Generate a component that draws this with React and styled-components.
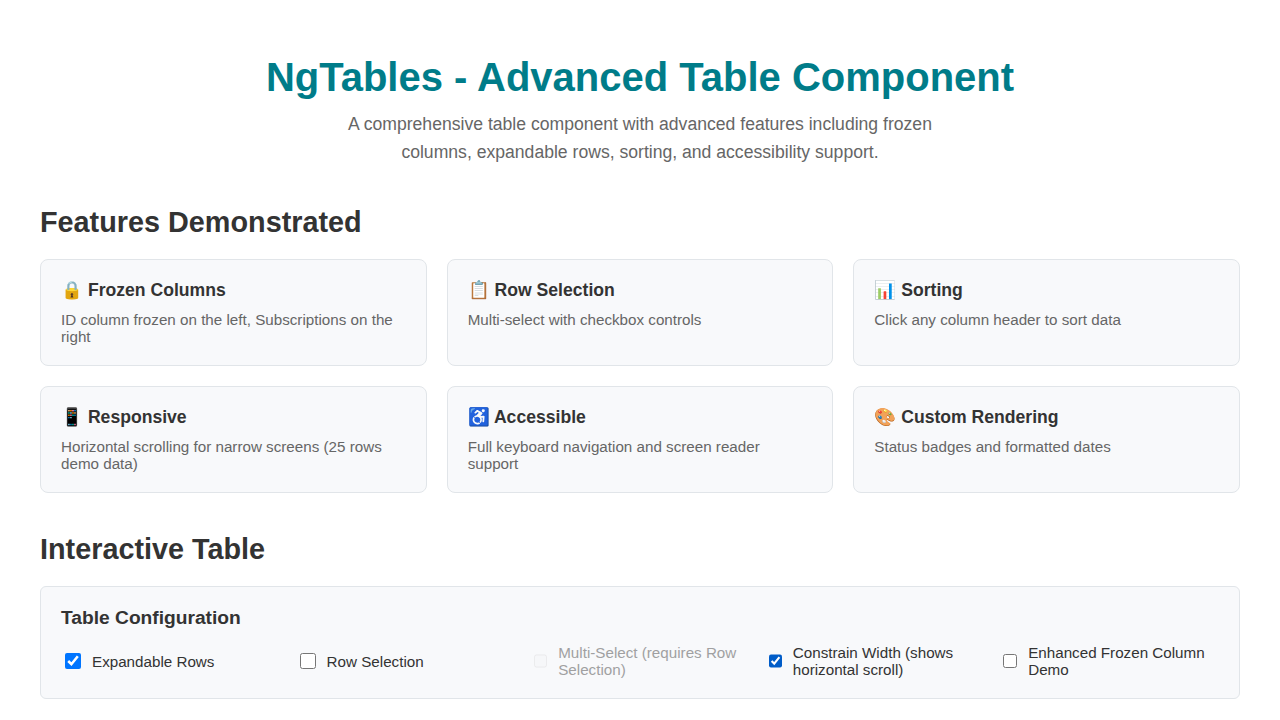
import React from "react";
import styled, { createGlobalStyle } from "styled-components";

const GlobalStyle = createGlobalStyle`
  * { box-sizing: border-box; }
  html, body { margin: 0; background: #fff; }
  body {
    font-family: "Liberation Sans", Arial, sans-serif;
    color: #333;
    height: 720px;
    overflow: hidden;
  }
`;

const Page = styled.main`
  max-width: 1280px;
  padding: 52px 40px 0;
`;

const Header = styled.header`
  text-align: center;
  margin-bottom: 40px;
`;

const Title = styled.h1`
  margin: 0 0 8px;
  font-size: 40px;
  line-height: 50px;
  font-weight: 700;
  color: #007c89;
`;

const Subtitle = styled.p`
  margin: 0 auto;
  max-width: 600px;
  font-size: 17.6px;
  line-height: 28.16px;
  color: #666;
`;

const SectionTitle = styled.h2`
  margin: 0 0 20px;
  font-size: 28.8px;
  line-height: 33px;
  font-weight: 700;
`;

const FeatureGrid = styled.div`
  display: grid;
  grid-template-columns: repeat(3, 1fr);
  gap: 20px;
  margin-bottom: 40px;
`;

const FeatureCard = styled.article`
  height: 107px;
  padding: 20px;
  background: #f8f9fb;
  border: 1px solid #e1e5e9;
  border-radius: 8px;
`;

const FeatureTitle = styled.h3`
  margin: 0 0 10px;
  font-size: 17.6px;
  line-height: 21px;
  font-weight: 700;
`;

const FeatureText = styled.p`
  margin: 0;
  font-size: 15.2px;
  line-height: 17px;
  color: #666;
`;

const ConfigPanel = styled.section`
  height: 113px;
  padding: 20px;
  background: #f8f9fb;
  border: 1px solid #e1e5e9;
  border-radius: 6px;
`;

const ConfigTitle = styled.h3`
  margin: 0 0 15px;
  font-size: 19.2px;
  line-height: 22px;
  font-weight: 700;
`;

const OptionGrid = styled.div`
  display: grid;
  grid-template-columns: repeat(5, 1fr);
  gap: 15px;
`;

const Option = styled.label`
  display: flex;
  align-items: center;
  gap: 8px;
  font-size: 15.2px;
  line-height: 17px;
  color: ${(p) => (p.$disabled ? "#666" : "#333")};
  opacity: ${(p) => (p.$disabled ? 0.6 : 1)};
`;

const Checkbox = styled.input`
  width: 16px;
  height: 16px;
  margin: 3px 3px 3px 4px;
  accent-color: ${(p) => p.$accent || "auto"};
  opacity: ${(p) => (p.disabled ? 0.5 : 1)};
`;

const features = [
  ["🔒 Frozen Columns", "ID column frozen on the left, Subscriptions on the right"],
  ["📋 Row Selection", "Multi-select with checkbox controls"],
  ["📊 Sorting", "Click any column header to sort data"],
  ["📱 Responsive", "Horizontal scrolling for narrow screens (25 rows demo data)"],
  ["♿ Accessible", "Full keyboard navigation and screen reader support"],
  ["🎨 Custom Rendering", "Status badges and formatted dates"],
];

const options = [
  { label: "Expandable Rows", checked: true },
  { label: "Row Selection" },
  { label: "Multi-Select (requires Row Selection)", disabled: true },
  { label: "Constrain Width (shows horizontal scroll)", checked: true, accent: "#005cc8" },
  { label: "Enhanced Frozen Column Demo" },
];

export default function App() {
  return (
    <Page>
      <GlobalStyle />
      <Header>
        <Title>NgTables - Advanced Table Component</Title>
        <Subtitle>
          A comprehensive table component with advanced features including frozen
          columns, expandable rows, sorting, and accessibility support.
        </Subtitle>
      </Header>
      <SectionTitle>Features Demonstrated</SectionTitle>
      <FeatureGrid>
        {features.map(([title, text]) => (
          <FeatureCard key={title}>
            <FeatureTitle>{title}</FeatureTitle>
            <FeatureText>{text}</FeatureText>
          </FeatureCard>
        ))}
      </FeatureGrid>
      <SectionTitle>Interactive Table</SectionTitle>
      <ConfigPanel>
        <ConfigTitle>Table Configuration</ConfigTitle>
        <OptionGrid>
          {options.map((o) => (
            <Option key={o.label} $disabled={o.disabled}>
              <Checkbox
                type="checkbox"
                defaultChecked={o.checked}
                disabled={o.disabled}
                $accent={o.accent}
              />
              {o.label}
            </Option>
          ))}
        </OptionGrid>
      </ConfigPanel>
    </Page>
  );
}
